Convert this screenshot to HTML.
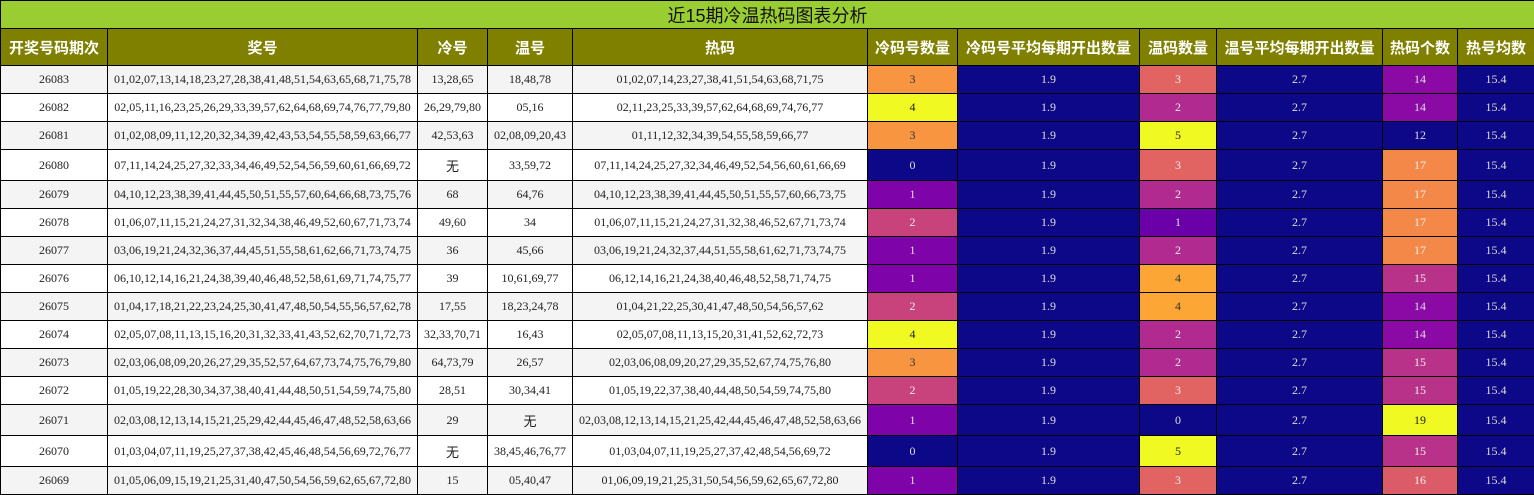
<!DOCTYPE html><html><head><meta charset="utf-8"><style>
body{margin:0;background:#fff;width:1534px;height:495px;overflow:hidden}
table{border-collapse:collapse;table-layout:fixed;width:1534px;font-family:"Liberation Serif","Noto Serif CJK SC",serif;font-size:12px}
td,th{border:1px solid #000;text-align:center;padding:0;white-space:nowrap;overflow:hidden}
.t td{background:#9acd32;font-size:18px;height:27px;font-family:"Liberation Sans","Noto Sans CJK SC",sans-serif;color:#111}
th{background:#808000;color:#fff;font-family:"Liberation Sans","Noto Sans CJK SC",sans-serif;font-size:15px;font-weight:bold;height:36px}
tr.r td{height:27px;color:#222}
tr.w td{height:30px}
tr.r:nth-child(odd) td{background:#f4f4f4}
tr.r:nth-child(even) td{background:#fff}
.wu{font-family:"Noto Sans CJK SC",sans-serif;font-size:13px}
tr.r td.c0{background:#0d0887;color:#ddd}
tr.r td.c1{background:#7e03a8;color:#ddd}
tr.r td.c2{background:#c8437c;color:#eee}
tr.r td.c3{background:#f89540;color:#333}
tr.r td.c4{background:#f0f921;color:#222}
tr.r td.w1{background:#6a00a8;color:#ddd}
tr.r td.w2{background:#b12a90;color:#eee}
tr.r td.w3{background:#e16462;color:#eee}
tr.r td.w4{background:#fca636;color:#333}
tr.r td.h14{background:#8b0aa5;color:#ddd}
tr.r td.h15{background:#b83289;color:#eee}
tr.r td.h16{background:#db5c68;color:#eee}
tr.r td.h17{background:#f48849;color:#eee}
</style></head><body><table>
<colgroup><col style="width:107px"><col style="width:310px"><col style="width:70px"><col style="width:85px"><col style="width:295px"><col style="width:90px"><col style="width:182px"><col style="width:77px"><col style="width:166px"><col style="width:75px"><col style="width:77px"></colgroup>
<tr class="t"><td colspan="11">近15期冷温热码图表分析</td></tr>
<tr><th>开奖号码期次</th><th>奖号</th><th>冷号</th><th>温号</th><th>热码</th><th>冷码号数量</th><th>冷码号平均每期开出数量</th><th>温码数量</th><th>温号平均每期开出数量</th><th>热码个数</th><th>热号均数</th></tr>
<tr class="r"><td>26083</td><td>01,02,07,13,14,18,23,27,28,38,41,48,51,54,63,65,68,71,75,78</td><td>13,28,65</td><td>18,48,78</td><td>01,02,07,14,23,27,38,41,51,54,63,68,71,75</td><td class="c3">3</td><td class="c0">1.9</td><td class="w3">3</td><td class="c0">2.7</td><td class="h14">14</td><td class="c0">15.4</td></tr>
<tr class="r"><td>26082</td><td>02,05,11,16,23,25,26,29,33,39,57,62,64,68,69,74,76,77,79,80</td><td>26,29,79,80</td><td>05,16</td><td>02,11,23,25,33,39,57,62,64,68,69,74,76,77</td><td class="c4">4</td><td class="c0">1.9</td><td class="w2">2</td><td class="c0">2.7</td><td class="h14">14</td><td class="c0">15.4</td></tr>
<tr class="r"><td>26081</td><td>01,02,08,09,11,12,20,32,34,39,42,43,53,54,55,58,59,63,66,77</td><td>42,53,63</td><td>02,08,09,20,43</td><td>01,11,12,32,34,39,54,55,58,59,66,77</td><td class="c3">3</td><td class="c0">1.9</td><td class="c4">5</td><td class="c0">2.7</td><td class="c0">12</td><td class="c0">15.4</td></tr>
<tr class="r w"><td>26080</td><td>07,11,14,24,25,27,32,33,34,46,49,52,54,56,59,60,61,66,69,72</td><td class="wu">无</td><td>33,59,72</td><td>07,11,14,24,25,27,32,34,46,49,52,54,56,60,61,66,69</td><td class="c0">0</td><td class="c0">1.9</td><td class="w3">3</td><td class="c0">2.7</td><td class="h17">17</td><td class="c0">15.4</td></tr>
<tr class="r"><td>26079</td><td>04,10,12,23,38,39,41,44,45,50,51,55,57,60,64,66,68,73,75,76</td><td>68</td><td>64,76</td><td>04,10,12,23,38,39,41,44,45,50,51,55,57,60,66,73,75</td><td class="c1">1</td><td class="c0">1.9</td><td class="w2">2</td><td class="c0">2.7</td><td class="h17">17</td><td class="c0">15.4</td></tr>
<tr class="r"><td>26078</td><td>01,06,07,11,15,21,24,27,31,32,34,38,46,49,52,60,67,71,73,74</td><td>49,60</td><td>34</td><td>01,06,07,11,15,21,24,27,31,32,38,46,52,67,71,73,74</td><td class="c2">2</td><td class="c0">1.9</td><td class="w1">1</td><td class="c0">2.7</td><td class="h17">17</td><td class="c0">15.4</td></tr>
<tr class="r"><td>26077</td><td>03,06,19,21,24,32,36,37,44,45,51,55,58,61,62,66,71,73,74,75</td><td>36</td><td>45,66</td><td>03,06,19,21,24,32,37,44,51,55,58,61,62,71,73,74,75</td><td class="c1">1</td><td class="c0">1.9</td><td class="w2">2</td><td class="c0">2.7</td><td class="h17">17</td><td class="c0">15.4</td></tr>
<tr class="r"><td>26076</td><td>06,10,12,14,16,21,24,38,39,40,46,48,52,58,61,69,71,74,75,77</td><td>39</td><td>10,61,69,77</td><td>06,12,14,16,21,24,38,40,46,48,52,58,71,74,75</td><td class="c1">1</td><td class="c0">1.9</td><td class="w4">4</td><td class="c0">2.7</td><td class="h15">15</td><td class="c0">15.4</td></tr>
<tr class="r"><td>26075</td><td>01,04,17,18,21,22,23,24,25,30,41,47,48,50,54,55,56,57,62,78</td><td>17,55</td><td>18,23,24,78</td><td>01,04,21,22,25,30,41,47,48,50,54,56,57,62</td><td class="c2">2</td><td class="c0">1.9</td><td class="w4">4</td><td class="c0">2.7</td><td class="h14">14</td><td class="c0">15.4</td></tr>
<tr class="r"><td>26074</td><td>02,05,07,08,11,13,15,16,20,31,32,33,41,43,52,62,70,71,72,73</td><td>32,33,70,71</td><td>16,43</td><td>02,05,07,08,11,13,15,20,31,41,52,62,72,73</td><td class="c4">4</td><td class="c0">1.9</td><td class="w2">2</td><td class="c0">2.7</td><td class="h14">14</td><td class="c0">15.4</td></tr>
<tr class="r"><td>26073</td><td>02,03,06,08,09,20,26,27,29,35,52,57,64,67,73,74,75,76,79,80</td><td>64,73,79</td><td>26,57</td><td>02,03,06,08,09,20,27,29,35,52,67,74,75,76,80</td><td class="c3">3</td><td class="c0">1.9</td><td class="w2">2</td><td class="c0">2.7</td><td class="h15">15</td><td class="c0">15.4</td></tr>
<tr class="r"><td>26072</td><td>01,05,19,22,28,30,34,37,38,40,41,44,48,50,51,54,59,74,75,80</td><td>28,51</td><td>30,34,41</td><td>01,05,19,22,37,38,40,44,48,50,54,59,74,75,80</td><td class="c2">2</td><td class="c0">1.9</td><td class="w3">3</td><td class="c0">2.7</td><td class="h15">15</td><td class="c0">15.4</td></tr>
<tr class="r w"><td>26071</td><td>02,03,08,12,13,14,15,21,25,29,42,44,45,46,47,48,52,58,63,66</td><td>29</td><td class="wu">无</td><td>02,03,08,12,13,14,15,21,25,42,44,45,46,47,48,52,58,63,66</td><td class="c1">1</td><td class="c0">1.9</td><td class="c0">0</td><td class="c0">2.7</td><td class="c4">19</td><td class="c0">15.4</td></tr>
<tr class="r w"><td>26070</td><td>01,03,04,07,11,19,25,27,37,38,42,45,46,48,54,56,69,72,76,77</td><td class="wu">无</td><td>38,45,46,76,77</td><td>01,03,04,07,11,19,25,27,37,42,48,54,56,69,72</td><td class="c0">0</td><td class="c0">1.9</td><td class="c4">5</td><td class="c0">2.7</td><td class="h15">15</td><td class="c0">15.4</td></tr>
<tr class="r"><td>26069</td><td>01,05,06,09,15,19,21,25,31,40,47,50,54,56,59,62,65,67,72,80</td><td>15</td><td>05,40,47</td><td>01,06,09,19,21,25,31,50,54,56,59,62,65,67,72,80</td><td class="c1">1</td><td class="c0">1.9</td><td class="w3">3</td><td class="c0">2.7</td><td class="h16">16</td><td class="c0">15.4</td></tr>
</table></body></html>
